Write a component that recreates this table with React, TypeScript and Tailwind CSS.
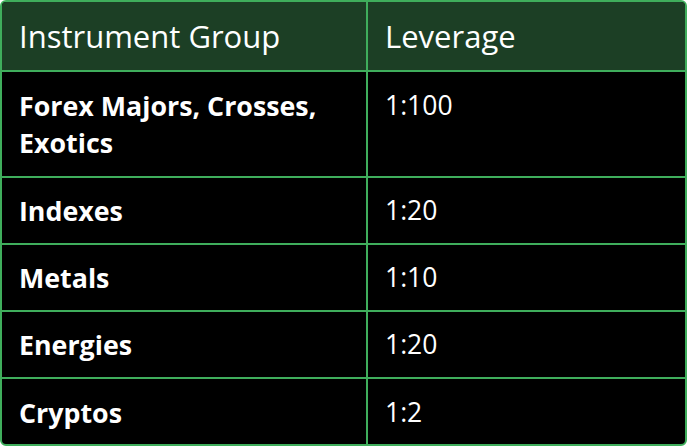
const rows = [
  { group: 'Forex Majors, Crosses, Exotics', leverage: '1:100' },
  { group: 'Indexes', leverage: '1:20' },
  { group: 'Metals', leverage: '1:10' },
  { group: 'Energies', leverage: '1:20' },
  { group: 'Cryptos', leverage: '1:2' },
]

export default function App() {
  return (
    <div className="w-[687px] h-[446px] bg-white" style={{ fontFamily: '"Open Sans", "Noto Sans", sans-serif' }}>
      <div className="w-[687px] h-[446px] rounded-[6px] overflow-hidden border-2 border-[#3fae5c] bg-black text-white">
        {/* Header */}
        <div className="grid grid-cols-[366px_1fr] h-[70px] bg-[#1c3f25] border-b-2 border-[#3fae5c]">
          <div className="flex items-center pl-[17px] text-[31px] border-r-2 border-[#3fae5c]">
            Instrument Group
          </div>
          <div className="flex items-center pl-[17px] text-[31px]">Leverage</div>
        </div>

        {rows.map((r, i) => (
          <div
            key={r.group}
            className={`grid grid-cols-[366px_1fr] ${i === 0 ? 'h-[106px]' : 'h-[67px]'} ${i < rows.length - 1 ? 'border-b-2 border-[#3fae5c]' : ''}`}
          >
            <div
              className={`flex ${i === 0 ? 'items-start pt-[15px]' : 'items-center'} pl-[17px] pr-4 text-[26.8px] font-bold leading-[37px] border-r-2 border-[#3fae5c]`}
            >
              {r.group}
            </div>
            <div className={`flex ${i === 0 ? 'items-start pt-[15px]' : 'items-center'} pl-[17px] text-[26.5px] leading-[37px]`}>
              {r.leverage}
            </div>
          </div>
        ))}
      </div>
    </div>
  )
}
